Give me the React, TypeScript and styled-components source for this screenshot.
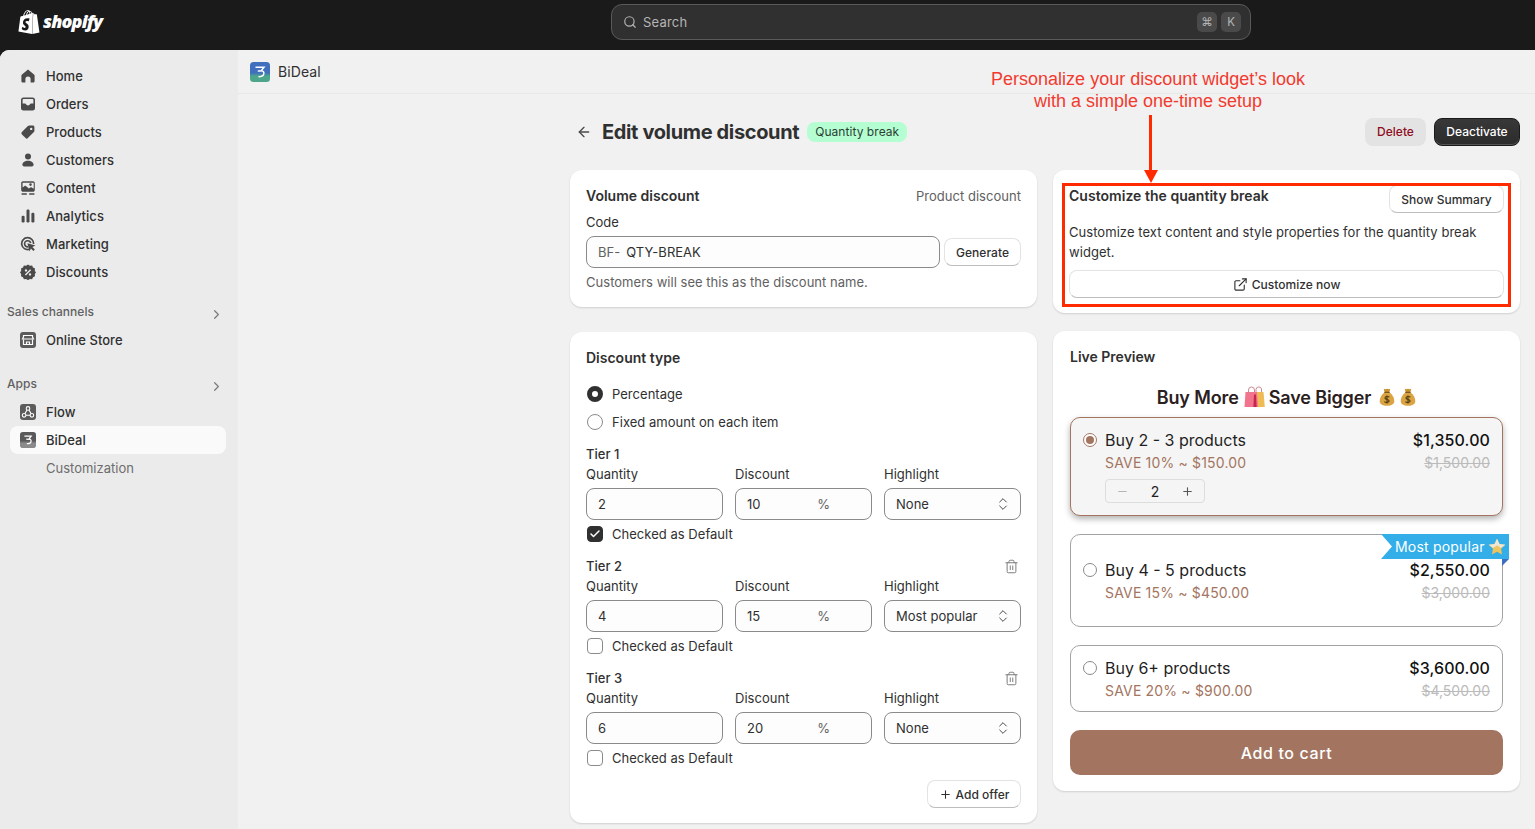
import React from "react";
import styled, { createGlobalStyle } from "styled-components";
import {
  ArrowLeft,
  Check,
  ChevronRight,
  ChevronsUpDown,
  ExternalLink,
  Minus,
  Plus,
  Search,
  Trash2,
} from "lucide-react";
import { SiShopify } from "react-icons/si";

const Global = createGlobalStyle`
  html, body { margin: 0; padding: 0; height: 100%; overflow: hidden; background: #1a1a1a; }
  body { font-family: Inter, "Noto Sans", sans-serif; font-size: 13px; color: #303030; -webkit-font-smoothing: antialiased; }
  * { box-sizing: border-box; }
`;

const Shell = styled.div`
  position: relative;
  width: 1535px;
  height: 829px;
  display: flex;
  flex-direction: column;
  overflow: hidden;
`;

const TopBar = styled.header`
  flex: 0 0 50px;
  padding-bottom: 6px;
  background: #1a1a1a;
  display: grid;
  grid-template-columns: 611px 640px 1fr;
  align-items: center;
`;

const Brand = styled.div`
  display: flex;
  align-items: center;
  gap: 2px;
  padding-left: 17px;
  color: #fff;
  font-size: 24px;
`;

const BrandName = styled.span`
  font-family: "Open Sans", sans-serif;
  font-style: italic;
  font-weight: 800;
  font-size: 18px;
  letter-spacing: -0.85px;
  margin-bottom: 2px;
`;

const SearchBox = styled.div`
  height: 36px;
  background: #303030;
  border: 1px solid #5a5a5a;
  border-radius: 11px;
  display: flex;
  align-items: center;
  padding: 0 9px 0 11px;
  color: #b5b5b5;
  gap: 4px;
  font-size: 13px;
`;

const SearchText = styled.span`
  flex: 1;
  margin-left: 2px;
  letter-spacing: 0.2px;
`;

const Kbd = styled.span`
  width: 20px;
  height: 20px;
  border-radius: 5px;
  background: #4a4a4a;
  color: #b5b5b5;
  font-size: 11.5px;
  display: flex;
  align-items: center;
  justify-content: center;
`;

const Body = styled.div`
  flex: 1;
  display: flex;
  min-height: 0;
  border-radius: 9px 0 0 0;
  overflow: hidden;
  background: #f1f1f1;
`;

const Sidebar = styled.nav`
  flex: 0 0 238px;
  background: #ebebeb;
  padding: 12px 12px 0 10px;
`;

const NavItem = styled.div<{ $active?: boolean; $muted?: boolean }>`
  height: 28px;
  display: flex;
  align-items: center;
  gap: 10px;
  padding-left: 10px;
  border-radius: 8px;
  font-size: 13px;
  font-weight: ${(p) => (p.$active ? 500 : p.$muted ? 400 : 450)};
  letter-spacing: ${(p) => (p.$muted ? "0" : "0.03px")};
  color: ${(p) => (p.$muted ? "#6d6d6d" : "#303030")};
  background: ${(p) => (p.$active ? "#fafafa" : "transparent")};
`;

const NavIcon = styled.svg`
  width: 16px;
  height: 16px;
  flex: none;
  fill: #4a4a4a;
`;

const SubLabel = styled.span`
  padding-left: 26px;
`;

const SectionHead = styled.div<{ $gap: number }>`
  height: 28px;
  padding-bottom: 2px;
  margin: ${(p) => p.$gap}px 0 0 -3px;
  display: flex;
  align-items: center;
  justify-content: space-between;
  font-size: 12px;
  font-weight: 500;
  letter-spacing: 0.06px;
  color: #616161;
  svg {
    color: #7d7d7d;
    margin: 6px 2px 0 0;
  }
`;

const Main = styled.main`
  flex: 1;
  min-width: 0;
  display: flex;
  flex-direction: column;
`;

const AppBar = styled.div`
  flex: 0 0 44px;
  display: flex;
  align-items: center;
  gap: 8px;
  padding-left: 12px;
  border-bottom: 1px solid #e8e8e8;
  font-size: 14px;
  letter-spacing: 0.1px;
  color: #303030;
`;

const Content = styled.div`
  width: 950px;
  margin: 0 15px 0 auto;
  padding-top: 24px;
`;

const PageHead = styled.div`
  height: 28px;
  display: flex;
  align-items: center;
  margin-bottom: 24px;
`;

const BackLink = styled.span`
  display: flex;
  margin: 0 10px 0 6px;
  color: #4a4a4a;
`;

const Title = styled.h1`
  margin: 0;
  font-size: 20px;
  font-weight: 700;
  letter-spacing: -0.36px;
  color: #303030;
`;

const Badge = styled.span`
  margin-left: 8px;
  height: 20px;
  padding: 0 8px 2px;
  background: #b4fed2;
  border-radius: 8px;
  display: flex;
  align-items: center;
  font-size: 12px;
  letter-spacing: 0.05px;
  color: #2c3e34;
`;

const HeadActions = styled.div`
  margin-left: auto;
  display: flex;
  gap: 8px;
`;

const DeleteBtn = styled.button`
  width: 61px;
  height: 28px;
  padding: 0 0 2px;
  border: 0;
  border-radius: 8px;
  background: #e3e3e3;
  color: #8e0b21;
  font: 500 12px Inter, sans-serif;
`;

const DarkBtn = styled.button`
  width: 86px;
  height: 28px;
  padding: 0 0 2px;
  border: 1px solid #1a1a1a;
  border-radius: 8px;
  background: linear-gradient(#383838, #2c2c2c);
  box-shadow: inset 0 -1px 0 #555;
  color: #fff;
  font: 500 12px Inter, sans-serif;
`;

const Columns = styled.div`
  display: grid;
  grid-template-columns: 467px 467px;
  gap: 16px;
  align-items: start;
`;

const Col = styled.div<{ $gap: number }>`
  display: flex;
  flex-direction: column;
  gap: ${(p) => p.$gap}px;
`;

const Card = styled.section<{ $h: number; $pt?: number }>`
  height: ${(p) => p.$h}px;
  background: #fff;
  border-radius: 12px;
  padding: ${(p) => p.$pt ?? 16}px 16px 0;
  box-shadow: 0 1px 2px rgba(0, 0, 0, 0.14);
`;

const SpaceRow = styled.div`
  display: flex;
  justify-content: space-between;
  align-items: center;
`;

const CardTitle = styled.h2<{ $inset?: number }>`
  margin: 0 0 0 ${(p) => p.$inset ?? 0}px;
  font-size: 14px;
  line-height: 20px;
  font-weight: 600;
  color: #303030;
`;

const PinnedTitle = styled(CardTitle)`
  align-self: flex-start;
  margin-top: 1px;
  letter-spacing: 0.03px;
`;

const Muted = styled.span`
  font-size: 13px;
  letter-spacing: 0.03px;
  color: #616161;
`;

const Label = styled.div`
  font-size: 13px;
  line-height: 20px;
  letter-spacing: 0.03px;
  color: #303030;
`;

const CodeLabel = styled(Label)`
  margin-top: 6px;
`;

const CodeRow = styled.div`
  display: flex;
  align-items: center;
  gap: 4px;
  margin-top: 4px;
`;

const Field = styled.div<{ $grow?: boolean }>`
  height: 32px;
  flex: ${(p) => (p.$grow ? 1 : "none")};
  border: 1px solid #8a8a8a;
  border-radius: 8px;
  background: #fdfdfd;
  display: flex;
  align-items: center;
  padding: 0 12px 0 11px;
  font-size: 13px;
  letter-spacing: 0.03px;
  color: #303030;
`;

const Prefix = styled.span`
  color: #616161;
  margin-right: 6px;
`;

const PercentSign = styled.span`
  margin-left: auto;
  margin-right: 29px;
  color: #616161;
`;

const SelectValue = styled.span`
  flex: 1;
`;

const SelectIcon = styled.span`
  display: flex;
  margin-right: -3px;
  color: #4a4a4a;
`;

const GhostBtn = styled.button<{ $w?: number; $h?: number }>`
  width: ${(p) => (p.$w ? `${p.$w}px` : "100%")};
  height: ${(p) => p.$h ?? 28}px;
  flex: none;
  background: #fff;
  border: 1px solid #e3e3e3;
  border-bottom-color: #bdbdbd;
  border-radius: 8px;
  color: #303030;
  font: 500 12px Inter, sans-serif;
  letter-spacing: 0.03px;
  display: flex;
  align-items: center;
  justify-content: center;
  gap: 4px;
`;

const Help = styled.p`
  margin: 4px 0 0;
  font-size: 13px;
  line-height: 20px;
  letter-spacing: 0.03px;
  color: #616161;
`;

const ChoiceRow = styled.div<{ $mt?: number }>`
  height: 20px;
  margin-top: ${(p) => p.$mt ?? 0}px;
  display: flex;
  align-items: center;
  gap: 9px;
  font-size: 13px;
  letter-spacing: 0.03px;
  color: #303030;
`;

const Radio = styled.span<{ $on?: boolean }>`
  width: 16px;
  height: 16px;
  margin-left: 1px;
  border-radius: 50%;
  background: #fff;
  border: ${(p) => (p.$on ? "5px solid #303030" : "1px solid #8a8a8a")};
`;

const Box = styled.span<{ $on?: boolean }>`
  width: 16px;
  height: 16px;
  margin-left: 1px;
  border-radius: 4px;
  background: ${(p) => (p.$on ? "#303030" : "#fff")};
  border: 1px solid ${(p) => (p.$on ? "#303030" : "#8a8a8a")};
  color: #fff;
  display: flex;
  align-items: center;
  justify-content: center;
`;

const TierHead = styled.div<{ $mt: number }>`
  height: 20px;
  margin-top: ${(p) => p.$mt}px;
  display: flex;
  align-items: center;
  justify-content: space-between;
  font-size: 13px;
  font-weight: 500;
  color: #303030;
  svg {
    color: #7d7d7d;
    margin-right: 2px;
  }
`;

const TierGrid = styled.div`
  display: grid;
  grid-template-columns: repeat(3, 137px);
  column-gap: 12px;
  row-gap: 4px;
`;

const AddRow = styled.div`
  display: flex;
  justify-content: flex-end;
  margin-top: 12px;
`;

const Desc = styled.p`
  margin: 9px 0 8px;
  font-size: 13px;
  line-height: 20px;
  letter-spacing: 0.05px;
  color: #303030;
`;

const Heading = styled.div`
  margin: 19px 0 9px;
  height: 22px;
  display: flex;
  justify-content: center;
  align-items: center;
  font-size: 18px;
  letter-spacing: -0.13px;
  font-weight: 600;
  color: #2b2020;
`;

const EmojiSvg = styled.svg<{ $ml: number; $mr?: number }>`
  flex: none;
  margin-left: ${(p) => p.$ml}px;
  margin-right: ${(p) => p.$mr ?? 0}px;
`;

const Options = styled.div`
  display: flex;
  flex-direction: column;
  margin: 0 1px;
`;

const Option = styled.div<{ $active?: boolean; $h: number; $mt?: number; $pt?: number }>`
  position: relative;
  height: ${(p) => p.$h}px;
  margin-top: ${(p) => p.$mt ?? 0}px;
  padding: ${(p) => p.$pt ?? 11}px 12px 0 12px;
  display: grid;
  grid-template-columns: 22px 1fr auto;
  grid-auto-rows: min-content;
  border-radius: 10px;
  border: 1px solid ${(p) => (p.$active ? "#a37561" : "#a3a3a3")};
  background: ${(p) => (p.$active ? "#f5f5f5" : "#fff")};
  box-shadow: ${(p) => (p.$active ? "0 3px 6px rgba(0,0,0,0.3)" : "none")};
`;

const OptRadio = styled.span<{ $on?: boolean }>`
  width: 14px;
  height: 14px;
  margin-top: 4px;
  border-radius: 50%;
  border: 1px solid ${(p) => (p.$on ? "#a37561" : "#8a8a8a")};
  background: #fff;
  display: flex;
  align-items: center;
  justify-content: center;
  &::after {
    content: "";
    width: 8px;
    height: 8px;
    border-radius: 50%;
    background: ${(p) => (p.$on ? "#a37561" : "transparent")};
  }
`;

const OptName = styled.span`
  font-size: 16px;
  line-height: 22px;
  color: #1f1f1f;
`;

const OptPrice = styled.span`
  font-size: 16px;
  line-height: 22px;
  font-weight: 500;
  letter-spacing: 0.1px;
  color: #111;
  text-align: right;
`;

const OptSave = styled.span`
  grid-column: 2;
  margin-top: 1px;
  font-size: 14px;
  line-height: 22px;
  letter-spacing: 0.18px;
  color: #a37561;
`;

const OptOld = styled.span`
  margin-top: 1px;
  font-size: 14px;
  line-height: 22px;
  color: #bbb;
  text-align: right;
  text-decoration: line-through;
`;

const Stepper = styled.div`
  grid-column: 2;
  margin-top: 5px;
  width: 100px;
  height: 24px;
  border: 1px solid #ddd;
  border-radius: 4px;
  display: grid;
  grid-template-columns: 1fr 1fr 1fr;
  align-items: center;
  justify-items: center;
  font-size: 14px;
  color: #1f1f1f;
`;

const StepBtn = styled.span<{ $off?: boolean }>`
  display: flex;
  color: ${(p) => (p.$off ? "#b5b5b5" : "#555")};
`;

const Ribbon = styled.div`
  position: absolute;
  top: -1px;
  right: -7px;
  width: 128px;
  height: 25px;
  background: #33aee8;
  clip-path: polygon(0 0, 100% 0, 100% 100%, 0 100%, 11px 50%);
  color: #fff;
  font-size: 14px;
  letter-spacing: 0.2px;
  display: flex;
  align-items: center;
  gap: 3px;
  padding-left: 14px;
`;

const RibbonFold = styled.span`
  position: absolute;
  top: 24px;
  right: -7px;
  width: 7px;
  height: 7px;
  background: #3f6fc0;
  clip-path: polygon(0 0, 100% 0, 0 100%);
`;

const CartBtn = styled.button`
  margin: 18px 1px 0;
  width: calc(100% - 2px);
  height: 45px;
  border: 0;
  border-radius: 10px;
  background: #a37561;
  color: #fff;
  font: 500 16px Inter, sans-serif;
  letter-spacing: 0.6px;
`;

const Annotation = styled.div`
  position: absolute;
  left: 948px;
  top: 68px;
  width: 400px;
  text-align: center;
  font-family: "Liberation Sans", Arial, sans-serif;
  font-size: 18px;
  line-height: 22px;
  color: #f23a2f;
`;

const ArrowShaft = styled.div`
  position: absolute;
  left: 1149px;
  top: 115px;
  width: 3px;
  height: 58px;
  background: #ff2a00;
`;

const ArrowHead = styled.div`
  position: absolute;
  left: 1144px;
  top: 170px;
  width: 14px;
  height: 13px;
  background: #ff2a00;
  clip-path: polygon(0 0, 100% 0, 50% 100%);
`;

const Highlight = styled.div`
  position: absolute;
  left: 1062px;
  top: 183px;
  width: 449px;
  height: 124px;
  border: 3px solid #ff2a00;
  pointer-events: none;
`;

const LogoSvg = styled.svg`
  flex: none;
`;

const HomeIcon = () => (
  <NavIcon viewBox="0 0 16 16"><path d="M8 1.6 2 6.4c-.4.3-.6.7-.6 1.2V13c0 .9.7 1.6 1.6 1.6h2.4V11a2.6 2.6 0 0 1 5.2 0v3.6H13c.9 0 1.6-.7 1.6-1.6V7.6c0-.5-.2-.9-.6-1.2L8 1.6Z" /></NavIcon>
);
const OrdersIcon = () => (
  <NavIcon viewBox="0 0 16 16"><path fillRule="evenodd" d="M3.5 1.5h9a2.5 2.5 0 0 1 2.500 2.500v8a2.500 2.500 0 0 1-2.500 2.500h-9A2.500 2.500 0 0 1 1 12V4a2.500 2.500 0 0 1 2.500-2.500Zm0 1.600A.9.9 0 0 0 2.600 4v3.400h2.300c.6 0 1 .4 1.200.9.2.6.9 1.100 1.900 1.100s1.700-.5 1.900-1.100c.2-.5.6-.9 1.200-.9h2.300V4a.9.9 0 0 0-.9-.9h-9Z" /></NavIcon>
);
const TagIcon = () => (
  <NavIcon viewBox="0 0 16 16"><path fillRule="evenodd" d="M9.2 1.6h3.6c.9 0 1.6.7 1.6 1.6v3.6c0 .5-.2 1-.5 1.3l-6 6c-.7.7-1.7.7-2.3 0l-3.7-3.7c-.6-.6-.6-1.6 0-2.3l6-6c.3-.3.8-.5 1.3-.5Zm2 4.5a1.2 1.2 0 1 0 0-2.4 1.2 1.2 0 0 0 0 2.4Z" /></NavIcon>
);
const PersonIcon = () => (
  <NavIcon viewBox="0 0 16 16"><circle cx="8" cy="4.500" r="3" /><path d="M8 8.800c-3 0-5.600 1.600-5.600 4 0 1.100.8 1.700 1.800 1.700h7.600c1 0 1.800-.6 1.800-1.700 0-2.400-2.600-4-5.600-4Z" /></NavIcon>
);
const ContentIcon = () => (
  <NavIcon viewBox="0 0 16 16"><path fillRule="evenodd" d="M3 1.200h10c1 0 1.800.8 1.800 1.800v7c0 1-.8 1.800-1.800 1.800H3c-1 0-1.800-.8-1.800-1.800V3c0-1 .8-1.800 1.800-1.800Zm0 1.500a.4.4 0 0 0-.4.3v4.600l2-1.600c.4-.3.9-.3 1.300 0l3 2.400 1.500-1c.4-.3.9-.3 1.300 0l2 1.300V3a.4.4 0 0 0-.3-.3H3Zm7.500 3.200a1.300 1.300 0 1 0 0-2.600 1.300 1.300 0 0 0 0 2.600Z" /><rect x="1.400" y="13.300" width="5.600" height="1.500" rx=".7" /><rect x="9" y="13.300" width="5.600" height="1.500" rx=".7" /></NavIcon>
);
const BarsIcon = () => (
  <NavIcon viewBox="0 0 16 16"><rect x="1.600" y="7.800" width="3" height="6.700" rx="1.200" /><rect x="6.500" y="1.500" width="3" height="13" rx="1.200" /><rect x="11.400" y="4.800" width="3" height="9.700" rx="1.200" /></NavIcon>
);
const TargetIcon = () => (
  <NavIcon viewBox="0 0 16 16"><path d="M7.600.8a6.800 6.800 0 1 0 2 13.300l-.5-1.600A5.100 5.100 0 1 1 12.700 8h1.700A6.800 6.800 0 0 0 7.600.8Z" /><path d="M7.600 3.900a3.900 3.900 0 1 0 .9 7.700L8 10a2.300 2.300 0 1 1 1.900-2.700l1.600-.3a3.900 3.900 0 0 0-3.900-3.100Z" /><path d="m7.400 7.200 8 2.400-3 1.400 2.400 2.600-1.400 1.400-2.500-2.600-1.400 3-2.100-8.200Z" /></NavIcon>
);
const DiscountIcon = () => (
  <NavIcon viewBox="0 0 16 16"><path fillRule="evenodd" d="m8 .6 1.900 1.200 2.200-.2.9 2 2 .9-.2 2.200L16 8.600l-1.200 1.500.2 2.200-2 .9-.9 2-2.200-.2L8 16.200 6.100 15l-2.200.2-.9-2-2-.9.2-2.200L0 8.600l1.200-1.900L1 4.500l2-.9.9-2 2.200.2L8 .6ZM6 5.200a1.200 1.200 0 1 0 0 2.400 1.200 1.200 0 0 0 0-2.400Zm4 4a1.200 1.200 0 1 0 0 2.400 1.200 1.200 0 0 0 0-2.400Zm.1-4-5.200 5.200 1 1 5.200-5.200-1-1Z" /></NavIcon>
);
const StoreIcon = () => (
  <NavIcon viewBox="0 0 16 16">
    <rect width="16" height="16" rx="3" fill="#5c5c5c" />
    <path d="M3.500 3.500h9v1.500l1 2H2.500l1-2V3.500Z" fill="none" stroke="#fff" strokeWidth="1.200" />
    <path d="M3.500 7.500v5h9v-5M6.500 12.500V10h3v2.500" fill="none" stroke="#fff" strokeWidth="1.200" />
  </NavIcon>
);
const FlowIcon = () => (
  <NavIcon viewBox="0 0 16 16">
    <rect width="16" height="16" rx="3" fill="#5c5c5c" />
    <g fill="none" stroke="#fff" strokeWidth="1.100">
      <circle cx="8" cy="4.400" r="1.800" />
      <circle cx="4.100" cy="11.300" r="1.800" />
      <circle cx="11.900" cy="11.300" r="1.800" />
      <path d="M7 6 5 9.600M9 6l2 3.600M5.900 11.300h4.200" />
    </g>
  </NavIcon>
);

const LogoMark = ({ size, gray }: { size: number; gray?: boolean }) => {
  const id = gray ? "logo-gray" : "logo-color";
  return (
    <LogoSvg width={size} height={size} viewBox="0 0 20 20">
      <defs>
        <linearGradient id={id} x1="0" y1="0" x2="0" y2="1">
          <stop offset="0.55" stopColor={gray ? "#595959" : "#3f6fbd"} />
          <stop offset="0.7" stopColor={gray ? "#8a8a8a" : "#4da58c"} />
        </linearGradient>
      </defs>
      <rect width="20" height="20" rx="3.500" fill={`url(#${id})`} />
      <path d="M5.500 5.200h8.500l-2.800 3.600c2.200.2 3 1.400 2.600 3.100-.4 1.900-2.400 2.900-5.300 2.700M7.800 9l3 .1" fill="none" stroke="#fff" strokeWidth="1.500" />
    </LogoSvg>
  );
};

const BagsEmoji = () => (
  <EmojiSvg $ml={5} $mr={4} width="21" height="22" viewBox="0 0 21 22">
    <path d="M11 6h8.500l1.300 15H12Z" fill="#eebb55" />
    <path d="M1.500 6H13l1 15H.5Z" fill="#f2748c" />
    <path d="M10 8.500h2l.6 12.500H9.400Z" fill="#c8254e" />
    <path d="M4.500 7V4a3 3 0 0 1 6 0v3M12 6V3.500a2.800 2.800 0 0 1 5.500-.5v3" fill="none" stroke="#c98a92" strokeWidth="1" />
  </EmojiSvg>
);

const MoneyEmoji = ({ ml }: { ml: number }) => (
  <EmojiSvg $ml={ml} width="16" height="20" viewBox="0 0 17 20">
    <path d="M6 5C2.500 8 .6 11 .8 14.400c.2 3 2.600 4.800 7.700 4.800s7.500-1.800 7.700-4.800C16.400 11 14.500 8 11 5Z" fill="#d9a441" />
    <path d="M5 1.200c1.200.6 2.300.6 3.500 0 1.200.6 2.300.6 3.500 0L11 5H6Z" fill="#c9912f" />
    <rect x="5.500" y="4.300" width="6" height="1.400" rx=".7" fill="#7a5a22" />
    <path d="M11 10.200c-.6-.9-4.600-1.100-4.700.8-.1 2 4.500 1.300 4.500 3.300 0 1.900-4.200 1.700-5 .6M8.500 8.400v8.400" fill="none" stroke="#4a3510" strokeWidth="1.100" />
  </EmojiSvg>
);

const StarEmoji = () => (
  <EmojiSvg $ml={0} width="18" height="18" viewBox="0 0 18 18">
    <path d="m9 .8 2.500 5.300 5.800.7-4.300 4 1.100 5.800L9 13.800l-5.100 2.800L5 10.800l-4.300-4 5.800-.7Z" fill="#eec45c" />
    <path d="m9 .8 2.500 5.300 5.800.7-4.300 3.200L9 7.500 5 10 .7 6.800l5.800-.7Z" fill="#ece7d6" />
  </EmojiSvg>
);

const navMain: [React.ReactNode, string][] = [
  [<HomeIcon />, "Home"],
  [<OrdersIcon />, "Orders"],
  [<TagIcon />, "Products"],
  [<PersonIcon />, "Customers"],
  [<ContentIcon />, "Content"],
  [<BarsIcon />, "Analytics"],
  [<TargetIcon />, "Marketing"],
  [<DiscountIcon />, "Discounts"],
];

const tiers = [
  { name: "Tier 1", qty: "2", pct: "10", highlight: "None", checked: true, removable: false },
  { name: "Tier 2", qty: "4", pct: "15", highlight: "Most popular", checked: false, removable: true },
  { name: "Tier 3", qty: "6", pct: "20", highlight: "None", checked: false, removable: true },
];

export default function App() {
  return (
    <Shell>
      <Global />
      <TopBar>
        <Brand>
          <SiShopify />
          <BrandName>shopify</BrandName>
        </Brand>
        <SearchBox>
          <Search size={14} strokeWidth={2} />
          <SearchText>Search</SearchText>
          <Kbd>⌘</Kbd>
          <Kbd>K</Kbd>
        </SearchBox>
      </TopBar>
      <Body>
        <Sidebar>
          {navMain.map(([icon, label]) => (
            <NavItem key={label}>
              {icon}
              {label}
            </NavItem>
          ))}
          <SectionHead $gap={12}>
            Sales channels
            <ChevronRight size={15} />
          </SectionHead>
          <NavItem>
            <StoreIcon />
            Online Store
          </NavItem>
          <SectionHead $gap={16}>
            Apps
            <ChevronRight size={15} />
          </SectionHead>
          <NavItem>
            <FlowIcon />
            Flow
          </NavItem>
          <NavItem $active>
            <LogoMark size={16} gray />
            BiDeal
          </NavItem>
          <NavItem $muted>
            <SubLabel>Customization</SubLabel>
          </NavItem>
        </Sidebar>
        <Main>
          <AppBar>
            <LogoMark size={20} />
            BiDeal
          </AppBar>
          <Content>
            <PageHead>
              <BackLink>
                <ArrowLeft size={16} />
              </BackLink>
              <Title>Edit volume discount</Title>
              <Badge>Quantity break</Badge>
              <HeadActions>
                <DeleteBtn>Delete</DeleteBtn>
                <DarkBtn>Deactivate</DarkBtn>
              </HeadActions>
            </PageHead>
            <Columns>
              <Col $gap={25}>
                <Card $h={137}>
                  <SpaceRow>
                    <CardTitle>Volume discount</CardTitle>
                    <Muted>Product discount</Muted>
                  </SpaceRow>
                  <CodeLabel>Code</CodeLabel>
                  <CodeRow>
                    <Field $grow>
                      <Prefix>BF-</Prefix>
                      QTY-BREAK
                    </Field>
                    <GhostBtn $w={77}>Generate</GhostBtn>
                  </CodeRow>
                  <Help>Customers will see this as the discount name.</Help>
                </Card>
                <Card $h={491}>
                  <CardTitle>Discount type</CardTitle>
                  <ChoiceRow $mt={16}>
                    <Radio $on />
                    Percentage
                  </ChoiceRow>
                  <ChoiceRow $mt={8}>
                    <Radio />
                    Fixed amount on each item
                  </ChoiceRow>
                  {tiers.map((t) => (
                    <div key={t.name}>
                      <TierHead $mt={12}>
                        {t.name}
                        {t.removable && <Trash2 size={15} strokeWidth={1.6} />}
                      </TierHead>
                      <TierGrid>
                        <Label>Quantity</Label>
                        <Label>Discount</Label>
                        <Label>Highlight</Label>
                        <Field>{t.qty}</Field>
                        <Field>
                          {t.pct}
                          <PercentSign>%</PercentSign>
                        </Field>
                        <Field>
                          <SelectValue>{t.highlight}</SelectValue>
                          <SelectIcon>
                            <ChevronsUpDown size={16} strokeWidth={1.5} />
                          </SelectIcon>
                        </Field>
                      </TierGrid>
                      <ChoiceRow $mt={4}>
                        <Box $on={t.checked}>
                          {t.checked && <Check size={12} strokeWidth={3} />}
                        </Box>
                        Checked as Default
                      </ChoiceRow>
                    </div>
                  ))}
                  <AddRow>
                    <GhostBtn $w={94}>
                      <Plus size={13} strokeWidth={2} />
                      Add offer
                    </GhostBtn>
                  </AddRow>
                </Card>
              </Col>
              <Col $gap={18}>
                <Card $h={143} $pt={15}>
                  <SpaceRow>
                    <PinnedTitle>Customize the quantity break</PinnedTitle>
                    <GhostBtn $w={115}>Show Summary</GhostBtn>
                  </SpaceRow>
                  <Desc>Customize text content and style properties for the quantity break widget.</Desc>
                  <GhostBtn>
                    <ExternalLink size={15} strokeWidth={1.8} />
                    Customize now
                  </GhostBtn>
                </Card>
                <Card $h={460}>
                  <CardTitle $inset={1}>Live Preview</CardTitle>
                  <Heading>
                    Buy More
                    <BagsEmoji />
                    Save Bigger
                    <MoneyEmoji ml={8} />
                    <MoneyEmoji ml={5} />
                  </Heading>
                  <Options>
                    <Option $active $h={99}>
                      <OptRadio $on />
                      <OptName>Buy 2 - 3 products</OptName>
                      <OptPrice>$1,350.00</OptPrice>
                      <OptSave>SAVE 10% ~ $150.00</OptSave>
                      <OptOld>$1,500.00</OptOld>
                      <Stepper>
                        <StepBtn $off><Minus size={13} /></StepBtn>
                        2
                        <StepBtn><Plus size={13} /></StepBtn>
                      </Stepper>
                    </Option>
                    <Option $h={93} $mt={18} $pt={24}>
                      <Ribbon>
                        Most popular
                        <StarEmoji />
                      </Ribbon>
                      <RibbonFold />
                      <OptRadio />
                      <OptName>Buy 4 - 5 products</OptName>
                      <OptPrice>$2,550.00</OptPrice>
                      <OptSave>SAVE 15% ~ $450.00</OptSave>
                      <OptOld>$3,000.00</OptOld>
                    </Option>
                    <Option $h={67} $mt={18}>
                      <OptRadio />
                      <OptName>Buy 6+ products</OptName>
                      <OptPrice>$3,600.00</OptPrice>
                      <OptSave>SAVE 20% ~ $900.00</OptSave>
                      <OptOld>$4,500.00</OptOld>
                    </Option>
                  </Options>
                  <CartBtn>Add to cart</CartBtn>
                </Card>
              </Col>
            </Columns>
          </Content>
        </Main>
      </Body>
      <Annotation>
        Personalize your discount widget’s look
        <br />
        with a simple one-time setup
      </Annotation>
      <ArrowShaft />
      <ArrowHead />
      <Highlight />
    </Shell>
  );
}
